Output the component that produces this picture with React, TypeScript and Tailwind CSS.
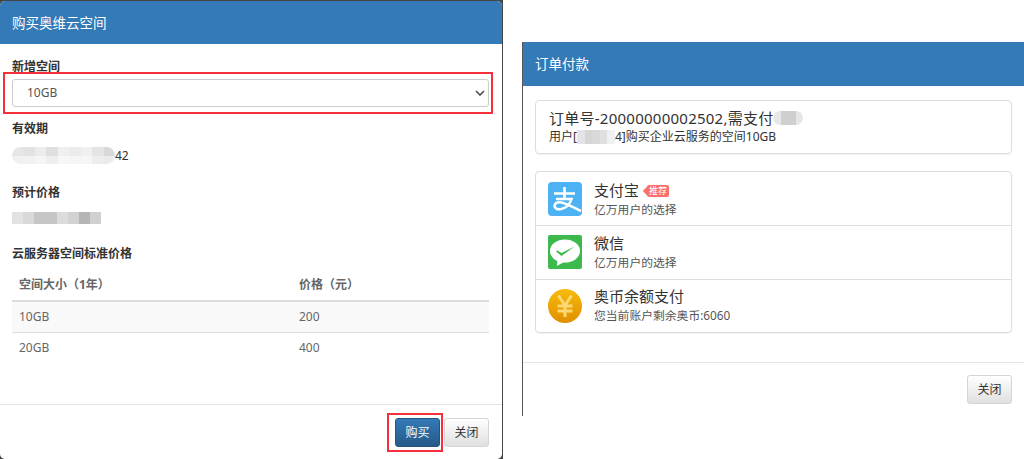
const font = "font-['Noto_Sans','Noto_Sans_CJK_SC',sans-serif]";

// 打码的像素块
const Mosaic = ({ cells, className }: { cells: string[]; className: string }) => (
  <div className={`flex overflow-hidden ${className}`}>
    {cells.map((c, i) => (
      <span key={i} className="flex-1" style={{ backgroundColor: c }} />
    ))}
  </div>
);

const Header = ({ title }: { title: string }) => (
  <div className="flex h-[43px] shrink-0 items-center bg-[#337ab7] px-3 pt-[2px] text-[13.5px] text-white">{title}</div>
);

const CloseButton = () => (
  <button className="h-[29px] w-[45px] rounded-[3px] border border-[#d5d5d5] bg-gradient-to-b from-white to-[#e0e0e0] text-xs text-[#333]">
    关闭
  </button>
);

const Alipay = () => (
  <svg viewBox="0 0 34 34" className="h-[34px] w-[34px] shrink-0">
    <rect width="34" height="34" rx="4" fill="#4db2f3" />
    <path
      d="M6 11.500h21M16.500 5v12M8 17h15.500c-1.500 5-5.500 9-10.500 10-3.500.6-6.500-.4-6.500-3 0-2.500 2.500-4 5.500-3.800 4.500.3 10 3.300 21 8.800"
      fill="none"
      stroke="#fff"
      strokeWidth="2.600"
    />
  </svg>
);

const Wechat = () => (
  <svg viewBox="0 0 34 34" className="h-[34px] w-[34px] shrink-0">
    <rect width="34" height="34" rx="2" fill="#3eb94e" />
    <ellipse cx="17" cy="16" rx="15" ry="11.500" fill="#fff" />
    <path d="M9.500 24l-.5 7 7-4z" fill="#fff" />
    <path d="M8 16.500l1.500-1 4 2.500 13-6.500-13 9.500z" fill="#3eb94e" />
  </svg>
);

const Coin = () => (
  <svg viewBox="0 0 34 34" className="h-[34px] w-[34px] shrink-0">
    <defs>
      <linearGradient id="coin" x1="0" y1="0" x2="0" y2="1">
        <stop offset="0" stopColor="#f8bb0a" />
        <stop offset="1" stopColor="#e08e00" />
      </linearGradient>
    </defs>
    <circle cx="17" cy="17" r="17" fill="url(#coin)" />
    <path
      d="M10.500 6.500l6.500 10 6.500-10M9.500 17h15M9.500 22h15M17 16.500v11.500"
      fill="none"
      stroke="#fbd874"
      strokeWidth="3"
    />
  </svg>
);

const payments = [
  { name: "支付宝", sub: "亿万用户的选择", icon: <Alipay />, tag: true },
  { name: "微信", sub: "亿万用户的选择", icon: <Wechat />, tag: false },
  { name: "奥币余额支付", sub: "您当前账户剩余奥币:6060", icon: <Coin />, tag: false },
];

export default function App() {
  return (
    <div className={`${font} flex h-[459px] w-[1024px] items-start overflow-hidden bg-white text-[#333]`}>
      {/* 购买弹窗 */}
      <div className="h-[459px] w-[503px] shrink-0 bg-[#444] pt-px pr-px">
        <div className="flex h-[458px] flex-col overflow-hidden rounded-[5px] bg-white">
          <Header title="购买奥维云空间" />
          <div className="flex-1 pt-[14px] pr-[13px] pl-3">
            <div className="text-xs leading-[17px] font-bold">新增空间</div>
            <div className="relative mt-[4px]">
              <div className="flex h-[28px] items-center justify-between rounded-[3px] border border-[#ccc] pr-[3px] pl-[14px] text-xs text-[#555]">
                10GB
                <svg viewBox="0 0 10 6" className="h-[6px] w-[10px]">
                  <path d="M1 1l4 4 4-4" fill="none" stroke="#444" strokeWidth="1.500" />
                </svg>
              </div>
              <div className="absolute -top-[7px] -right-[4px] -bottom-[7px] -left-[9px] border-2 border-[#f5303a]" />
            </div>
            <div className="mt-[13px] text-xs leading-[17px] font-bold">有效期</div>
            <div className="mt-[10px] flex h-[17px] items-center text-xs">
              <div className="w-[103px] overflow-hidden rounded-full">
                <Mosaic
                  className="h-[9px]"
                  cells={["#e6e6e6", "#e2e2e2", "#ececec", "#dfdfdf", "#efefef", "#ebebeb", "#f0f0f0", "#e4e4e4", "#d9d9d9"]}
                />
                <Mosaic
                  className="h-[8px]"
                  cells={["#f0f0f0", "#f2f2f2", "#f5f5f5", "#eeeeee", "#f7f7f7", "#f5f5f5", "#f6f6f6", "#ededed", "#ebebeb"]}
                />
              </div>
              42
            </div>
            <div className="mt-[20px] text-xs leading-[17px] font-bold">预计价格</div>
            <Mosaic
              className="mt-[11px] h-[12px] w-[89px]"
              cells={["#e2e2e2", "#d9d9d9", "#c6c6c6", "#c6c6c6", "#dcdcdc", "#d2d2d2", "#b5b5b5", "#d0d0d0"]}
            />
            <div className="mt-[21px] text-xs leading-[17px] font-bold">云服务器空间标准价格</div>
            <table className="mt-[8px] w-full text-xs text-[#666]">
              <thead>
                <tr className="h-[31px] border-b-2 border-[#ddd] text-left">
                  <th className="w-[280px] pl-[7px] font-bold">空间大小（1年）</th>
                  <th className="pl-[7px] font-bold">价格（元）</th>
                </tr>
              </thead>
              <tbody>
                <tr className="h-[31px] border-b border-[#ddd] bg-[#f9f9f9]">
                  <td className="pl-[7px]">10GB</td>
                  <td className="pl-[7px]">200</td>
                </tr>
                <tr className="h-[31px]">
                  <td className="pl-[7px]">20GB</td>
                  <td className="pl-[7px]">400</td>
                </tr>
              </tbody>
            </table>
          </div>
          <div className="flex h-[55px] shrink-0 items-start justify-end gap-[4px] border-t border-[#e5e5e5] pt-[13px] pr-[13px]">
            <div className="relative">
              <button className="h-[29px] w-[45px] rounded-[3px] border border-[#245580] bg-gradient-to-b from-[#337ab7] to-[#265a88] text-xs text-white">
                购买
              </button>
              <div className="absolute -top-[5px] -right-[3px] -bottom-[5px] -left-[8px] border-2 border-[#f5303a]" />
            </div>
            <CloseButton />
          </div>
        </div>
      </div>

      {/* 订单付款弹窗 */}
      <div className="mt-[42px] ml-[19px] flex h-[374px] flex-1 flex-col border-l border-[#555]">
        <div className="flex flex-col">
          <Header title="订单付款" />
          <div className="h-px bg-[#337ab7]" />
        </div>
        <div className="flex-1 px-3 pt-[14px]">
          <div className="h-[54px] rounded-[4px] border border-[#ddd] px-[13px] pt-[6px] shadow-[0_1px_1px_rgba(0,0,0,0.05)]">
            <div className="flex h-[22px] items-center text-[15px] tracking-[0.25px]">
              订单号-20000000002502,需支付
              <Mosaic className="h-[14px] w-[30px] rounded-full" cells={["#e8e8e8", "#cfcfcf", "#cfcfcf", "#e6e6e6"]} />
            </div>
            <div className="flex h-[15px] items-center text-xs">
              用户[
              <Mosaic className="h-[14px] w-[38px]" cells={["#e4e4e4", "#d5d5d5", "#d9d9d9", "#e0e0e0", "#f0f0f0"]} />
              4]购买企业云服务的空间10GB
            </div>
          </div>
          <div className="mt-[17px] rounded-[4px] border border-[#ddd] shadow-[0_1px_1px_rgba(0,0,0,0.05)]">
            {payments.map((p, i) => (
              <div
                key={p.name}
                className={`flex h-[53.3px] items-center gap-[12px] px-[12px] ${i > 0 ? "border-t border-[#ddd]" : ""}`}
              >
                {p.icon}
                <div className={i > 0 ? "-mt-[2px]" : ""}>
                  <div className="flex h-[22px] items-center text-[15px] leading-[22px]">
                    {p.name}
                    {p.tag && (
                      <span className="relative mt-[1px] ml-[8px] rounded-[2px] bg-[#fb6e6a] px-[2px] text-[9px] leading-[12px] text-white before:absolute before:top-[3px] before:-left-[3px] before:h-[6px] before:w-[6px] before:rotate-45 before:bg-[#fb6e6a] before:content-['']">
                        <span className="relative">推荐</span>
                      </span>
                    )}
                  </div>
                  <div className="text-[11.8px] leading-[17px] text-[#555]">{p.sub}</div>
                </div>
              </div>
            ))}
          </div>
        </div>
        <div className="flex h-[54px] shrink-0 items-start justify-end border-t border-[#e5e5e5] px-3 pt-[12px]">
          <CloseButton />
        </div>
      </div>
    </div>
  );
}
